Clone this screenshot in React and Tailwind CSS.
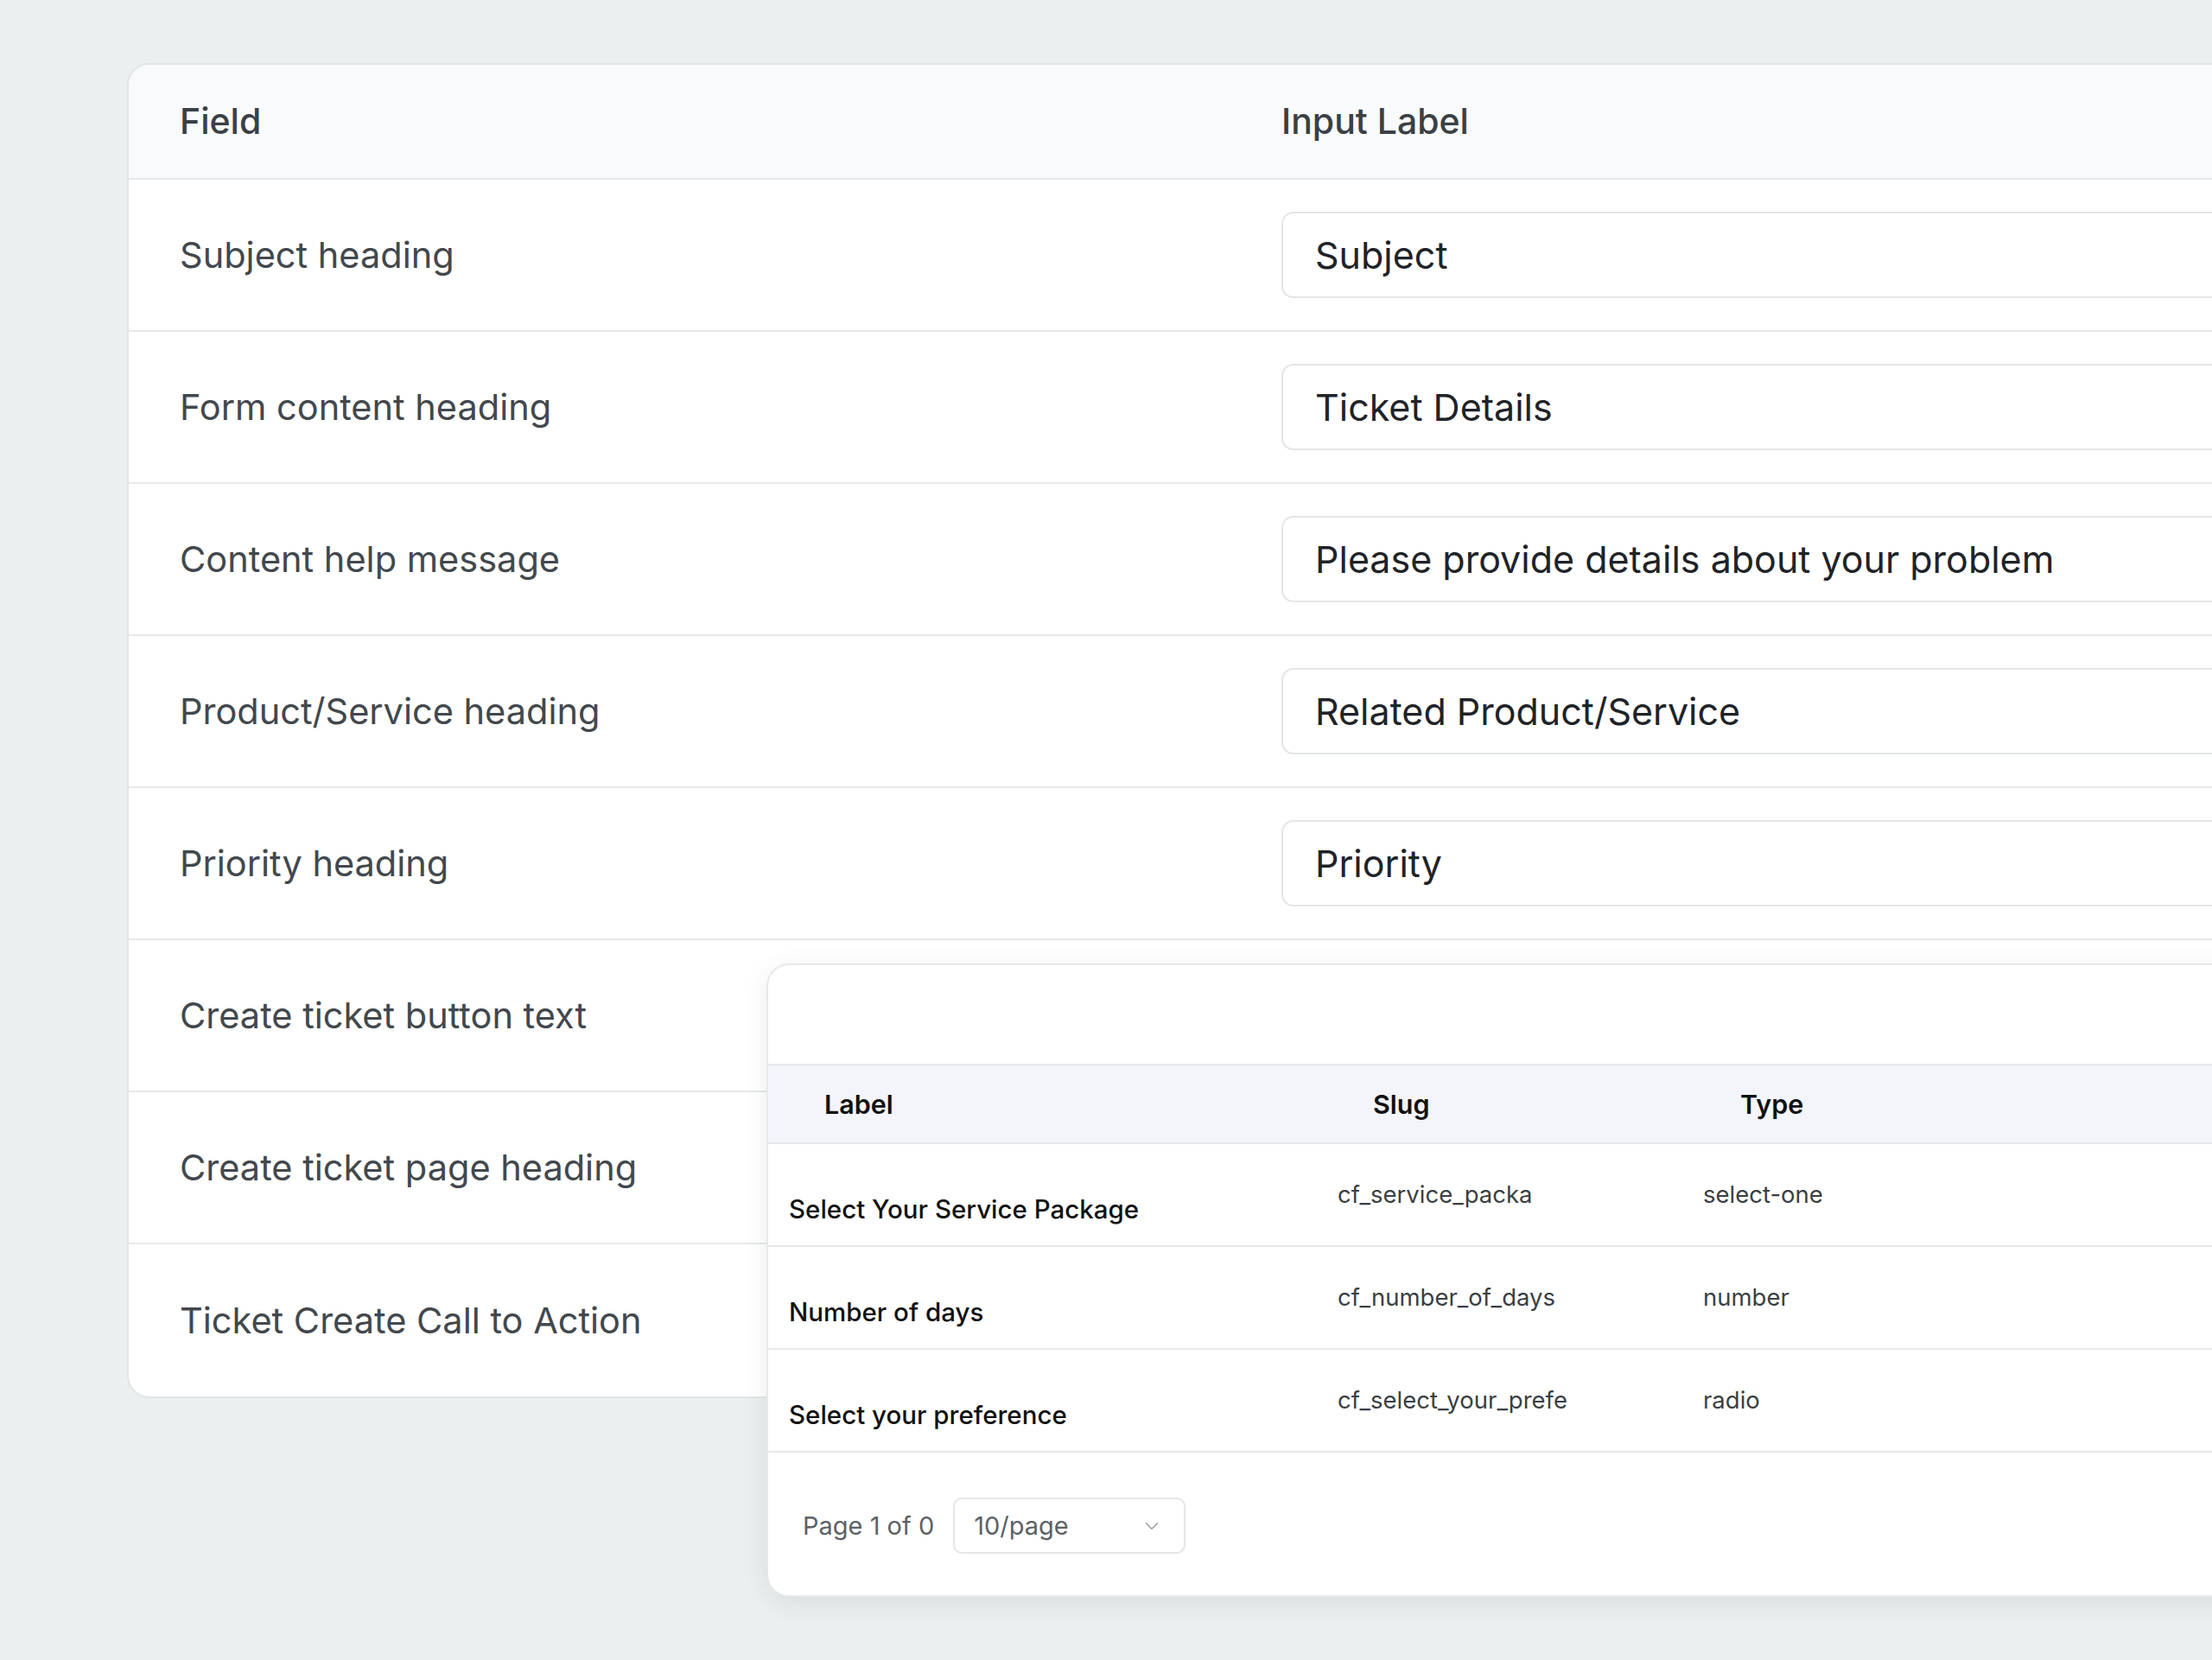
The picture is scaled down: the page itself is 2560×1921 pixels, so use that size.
import React from 'react'
import { ChevronDown } from 'lucide-react'

const fields = [
  ['Subject heading', 'Subject'],
  ['Form content heading', 'Ticket Details'],
  ['Content help message', 'Please provide details about your problem'],
  ['Product/Service heading', 'Related Product/Service'],
  ['Priority heading', 'Priority'],
  ['Create ticket button text', null],
  ['Create ticket page heading', null],
  ['Ticket Create Call to Action', null],
]

const customFields = [
  ['Select Your Service Package', 'cf_service_packa', 'select-one'],
  ['Number of days', 'cf_number_of_days', 'number'],
  ['Select your preference', 'cf_select_your_prefe', 'radio'],
]

export default function App() {
  return (
    <div className="relative w-[2560px] h-[1921px] overflow-hidden bg-[#eceff0]" style={{ fontFamily: "Inter, 'Liberation Sans', sans-serif" }}>
      <div className="absolute left-[147px] top-[73px] w-[2600px] rounded-[26px] border-2 border-[#e2e5e7] bg-white overflow-hidden">
        <div className="grid grid-cols-[1334px_1fr] h-[133px] items-center bg-[#f8fafb] border-b-2 border-[#e6e9eb] text-[41px] font-medium text-[#3a4045]">
          <div className="pl-[59px]">Field</div>
          <div>Input Label</div>
        </div>
        {fields.map(([label, value], i) => (
          <div key={label} className={`grid grid-cols-[1334px_1fr] h-[176px] items-center ${i < fields.length - 1 ? 'border-b-2 border-[#e6e9eb]' : ''}`}>
            <div className="pl-[59px] text-[41.5px] text-[#42484d]">{label}</div>
            {value && (
              <div className="h-[100px] flex items-center pl-[37px] rounded-[14px] border-2 border-[#e3e6e8] text-[43px] text-[#1f2328]">
                {value}
              </div>
            )}
          </div>
        ))}
      </div>

      <div className="absolute left-[887px] top-[1115px] w-[1800px] h-[733px] rounded-[26px] border-2 border-[#e6e9eb] bg-white shadow-[0_6px_30px_rgba(0,0,0,0.08)] overflow-hidden flex flex-col">
        <div className="h-[116px] border-b-2 border-[#e6e9eb]" />
        <div className="grid grid-cols-[659px_423px_1fr] h-[91px] items-center bg-[#f3f5fb] border-b-2 border-[#e6e9eb] text-[30.5px] font-semibold text-[#111]">
          <div className="pl-[65px]">Label</div>
          <div className="pl-[41px]">Slug</div>
          <div className="pl-[43px]">Type</div>
        </div>
        {customFields.map(([label, slug, type]) => (
          <div key={slug} className="grid grid-cols-[659px_423px_1fr] h-[119px] border-b-2 border-[#e6e9eb]">
            <div className="pl-[24px] pt-[53px] text-[29.5px] font-medium text-[#111]">{label}</div>
            <div className="pt-[38px] text-[27.5px] text-[#3a3f44]">{slug}</div>
            <div className="pt-[38px] text-[27.5px] text-[#3a3f44]">{type}</div>
          </div>
        ))}
        <div className="flex items-center gap-[22px] pl-[40px] mt-[52px]">
          <span className="text-[29px] text-[#5c6166]">Page 1 of 0</span>
          <div className="w-[269px] h-[65px] rounded-[10px] border-2 border-[#e3e6e8] flex items-center justify-between pl-[22px] pr-[24px] text-[29px] text-[#5c6166]">
            <span>10/page</span>
            <ChevronDown size={26} strokeWidth={1.5} className="text-[#9aa0a5]" />
          </div>
        </div>
      </div>
    </div>
  )
}
